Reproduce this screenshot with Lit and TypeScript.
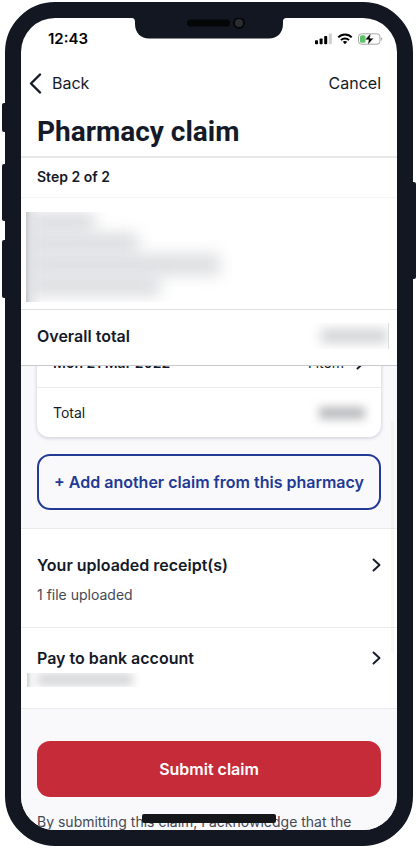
import { LitElement, html, css, svg } from "lit";
import { customElement, property } from "lit/decorators.js";

const chevron = (dir: "left" | "right") => svg`
  <path d=${dir === "left" ? "M11 1.5L2 10.5L11 19.5" : "M1.5 1.5L7.5 7L1.5 12.5"}
    fill="none" stroke="currentColor" stroke-width=${dir === "left" ? 2.4 : 1.9}
    stroke-linecap="round" stroke-linejoin="round"></path>`;

@customElement("status-bar")
class StatusBar extends LitElement {
  static styles = css`
    :host {
      display: flex;
      justify-content: space-between;
      align-items: center;
      height: 42px;
      padding: 0 14px 0 27px;
      color: #000;
    }
    .time {
      font-size: 15px;
      line-height: 20px;
      font-weight: 600;
    }
    .icons {
      display: flex;
      align-items: center;
      gap: 5px;
    }
    svg {
      display: block;
    }
  `;

  render() {
    return html`
      <span class="time">12:43</span>
      <span class="icons">
        <svg width="17" height="12" viewBox="0 0 17 12" aria-hidden="true">
          <rect x="0" y="7.2" width="3" height="4" rx="0.8"></rect>
          <rect x="4.6" y="5.4" width="3" height="5.8" rx="0.8"></rect>
          <rect x="9.2" y="3" width="3" height="8.2" rx="0.8"></rect>
          <rect x="13.8" y="0.4" width="3" height="10.8" rx="0.8" fill="#cfcfd1"></rect>
        </svg>
        <svg width="16" height="12" viewBox="0 0 16 12" aria-hidden="true">
          <g fill="none" stroke="#000" stroke-width="2">
            <path d="M1.3 4.4C5 0.6 11 0.6 14.7 4.4"></path>
            <path d="M3.9 7.1C6.2 4.9 9.8 4.9 12.1 7.1"></path>
          </g>
          <path d="M8 11.2L5.7 8.8C7 7.7 9 7.7 10.3 8.8Z"></path>
        </svg>
        <svg width="25" height="12" viewBox="0 0 25 12" aria-hidden="true">
          <rect x="0.5" y="0.8" width="21.5" height="10.4" rx="3" fill="none" stroke="#a5a5a7"></rect>
          <rect x="2" y="2.3" width="5.5" height="7.4" rx="1.5" fill="#5ec466"></rect>
          <path d="M23.2 4.2C24.6 4.6 24.6 7.4 23.2 7.8Z" fill="#a5a5a7"></path>
          <path d="M12.9 0L7 6.8H10.7L9.6 12L15.6 5.2H11.8Z" stroke="#fff" stroke-width="0.4"></path>
        </svg>
      </span>
    `;
  }
}

@customElement("link-row")
class LinkRow extends LitElement {
  @property() heading = "";

  static styles = css`
    :host {
      display: block;
      background: #fff;
      border-top: 1px solid #ebebed;
    }
    .row {
      display: flex;
      justify-content: space-between;
      align-items: center;
      padding: 0 16px;
      color: #151a29;
      font-size: 16px;
      line-height: 24px;
      font-weight: 600;
      text-decoration: none;
    }
    svg {
      display: block;
    }
  `;

  render() {
    return html`
      <a class="row" href="#">
        <span>${this.heading}</span>
        <svg width="9" height="14" viewBox="0 0 9 14" aria-hidden="true">${chevron("right")}</svg>
      </a>
      <slot></slot>
    `;
  }
}

@customElement("app-root")
class AppRoot extends LitElement {
  static styles = css`
    :host {
      display: block;
      box-sizing: border-box;
      height: 100vh;
      padding: 2px 7px 2px 5px;
      background: #fff;
      color: #151a29;
      font-family: Inter, "Liberation Sans", sans-serif;
      font-size: 14px;
      line-height: 20px;
    }
    .phone {
      position: relative;
      box-sizing: border-box;
      height: 100%;
      border: 16px solid #121722;
      border-radius: 50px;
      background: #121722;
    }
    .key {
      position: absolute;
      width: 3px;
      border-radius: 2px 0 0 2px;
      background: #121722;
      left: -19px;
    }
    .mute {
      top: 85px;
      height: 29px;
    }
    .up {
      top: 146px;
      height: 57px;
    }
    .down {
      top: 222px;
      height: 58px;
    }
    .power {
      left: auto;
      right: -19px;
      top: 164px;
      height: 97px;
      border-radius: 0 2px 2px 0;
    }
    .screen {
      position: relative;
      display: flex;
      flex-direction: column;
      height: 100%;
      overflow: hidden;
      border-radius: 34px;
      background: #fff;
    }
    .notch {
      position: absolute;
      top: 0;
      left: 50%;
      transform: translateX(-50%);
      display: block;
    }
    .nav {
      display: flex;
      justify-content: space-between;
      align-items: center;
      height: 46px;
      padding: 0 16px 0 8px;
    }
    button {
      font: inherit;
      color: inherit;
      background: none;
      border: 0;
      padding: 0;
    }
    .nav button {
      display: flex;
      align-items: center;
      gap: 10px;
      font-size: 16px;
      line-height: 24px;
    }
    h1 {
      margin: 0;
      padding: 10px 16px 8px;
      font-family: Roboto, Inter, sans-serif;
      font-size: 28px;
      line-height: 32px;
      font-weight: 700;
      border-bottom: 2px solid #e9e9ec;
    }
    .step {
      padding: 9px 16px 10px;
      font-weight: 600;
      border-bottom: 1px solid #f4f4f6;
    }
    .redacted {
      overflow: hidden;
      background: #fff;
    }
    .smudge {
      background: #c9cacd;
      filter: blur(6px);
    }
    .member {
      margin: 14px 160px 7px 5px;
      height: 90px;
      background: linear-gradient(90deg, #c2c3c7, #e6e7e9 5px, #fff 16px);
    }
    .member .smudge {
      height: 21px;
      margin-left: 4px;
      background: #dcdde0;
      filter: blur(8px);
    }
    .w1 { width: 64px; }
    .w2 { width: 108px; }
    .w3 { width: 190px; }
    .w4 { width: 130px; }
    .overall {
      display: flex;
      justify-content: space-between;
      align-items: center;
      height: 51px;
      padding: 0 8px 4px 16px;
      font-size: 16px;
      line-height: 24px;
      font-weight: 600;
      border-top: 1px solid #e0e0e3;
      border-bottom: 1px solid #c8c9cc;
    }
    .sum {
      width: 87px;
      height: 26px;
      border-right: 1px solid #dcdcdf;
    }
    .sum .smudge {
      margin: 6px 0 0 20px;
      height: 14px;
      background: #d2d3d6;
    }
    .list {
      flex: 1;
      min-height: 0;
      overflow: hidden;
      background: #f9f9fb;
    }
    .track {
      position: absolute;
      right: 3px;
      top: 403px;
      width: 3px;
      height: 232px;
      background: #15192908;
    }
    .card {
      margin: -28px 16px 17px;
      border-radius: 12px;
      background: #fff;
      box-shadow: 0 1px 3px 1px #d9d9e2;
    }
    .line {
      display: flex;
      justify-content: space-between;
      align-items: center;
      height: 49px;
      padding: 0 16px;
    }
    .line + .line {
      border-top: 1px solid #ebebed;
    }
    .line b {
      font-weight: 600;
    }
    .count {
      display: flex;
      align-items: center;
      gap: 12px;
    }
    .amount {
      width: 46px;
      height: 12px;
      background: #b9babd;
      filter: blur(5px);
    }
    .add, .submit {
      display: block;
      box-sizing: border-box;
      width: calc(100% - 32px);
      height: 56px;
      margin: 0 16px;
      border-radius: 13px;
      font-size: 16px;
      line-height: 24px;
      font-weight: 600;
      white-space: nowrap;
    }
    .add {
      margin-bottom: 18px;
      border: 2px solid #223a94;
      color: #223a94;
    }
    .receipts {
      padding: 24px 0 22px;
    }
    .bank {
      padding: 18px 0 21px;
    }
    .files {
      margin: 0;
      padding: 8px 16px 0;
      color: #454956;
    }
    .account {
      height: 14px;
      margin: 3px 200px 0 6px;
      background: linear-gradient(90deg, #d0d1d4, #f4f4f5 4px, #fff 10px);
    }
    .account .smudge {
      height: 13px;
      width: 96px;
      margin-left: 10px;
      background: #d6d7da;
      filter: blur(5px);
    }
    .foot {
      border-top: 1px solid #ebebed;
      padding-top: 32px;
    }
    .submit {
      background: #c62b39;
      color: #fff;
    }
    .terms {
      margin: 0;
      padding: 15px 16px;
      color: #454956;
    }
    .home {
      position: absolute;
      bottom: 7px;
      left: 50%;
      width: 134px;
      height: 9px;
      margin-left: -67px;
      border-radius: 2px;
      background: #151619;
    }
  `;

  render() {
    return html`
      <div class="phone">
        <i class="key mute"></i><i class="key up"></i><i class="key down"></i><i class="key power"></i>
        <main class="screen">
          <status-bar></status-bar>
          <svg class="notch" width="156" height="21" viewBox="0 0 156 21" aria-hidden="true">
            <path d="M0 0H156C153 0 152 1 152 4V6C152 15 146 20.5 138 20.5H18C10 20.5 4 15 4 6V4C4 1 3 0 0 0Z" fill="#121722"></path>
            <rect x="56" y="1.5" width="43" height="7" rx="3.5" fill="#050608"></rect>
            <circle cx="108" cy="5" r="5" fill="#2a2c30" stroke="#050608" stroke-width="2"></circle>
          </svg>
          <nav class="nav">
            <button>
              <svg width="13" height="21" viewBox="0 0 13 21" aria-hidden="true">${chevron("left")}</svg>
              Back
            </button>
            <button>Cancel</button>
          </nav>
          <h1>Pharmacy claim</h1>
          <div class="step">Step 2 of 2</div>
          <div class="redacted member">
            <div class="smudge w1"></div>
            <div class="smudge w2"></div>
            <div class="smudge w3"></div>
            <div class="smudge w4"></div>
          </div>
          <div class="overall">
            <span>Overall total</span>
            <div class="redacted sum"><div class="smudge"></div></div>
          </div>
          <div class="list">
            <div class="card">
              <div class="line">
                <b>Mon 21 Mar 2022</b>
                <span class="count">1 item
                  <svg width="9" height="14" viewBox="0 0 9 14" aria-hidden="true">${chevron("right")}</svg>
                </span>
              </div>
              <div class="line"><span>Total</span><div class="amount"></div></div>
            </div>
            <button class="add">+ Add another claim from this pharmacy</button>
            <link-row class="receipts" heading="Your uploaded receipt(s)">
              <p class="files">1 file uploaded</p>
            </link-row>
            <link-row class="bank" heading="Pay to bank account">
              <div class="redacted account"><div class="smudge"></div></div>
            </link-row>
            <div class="foot">
              <button class="submit">Submit claim</button>
              <p class="terms">By submitting this claim, I acknowledge that the</p>
            </div>
          </div>
          <div class="track"></div>
          <div class="home"></div>
        </main>
      </div>
    `;
  }
}
